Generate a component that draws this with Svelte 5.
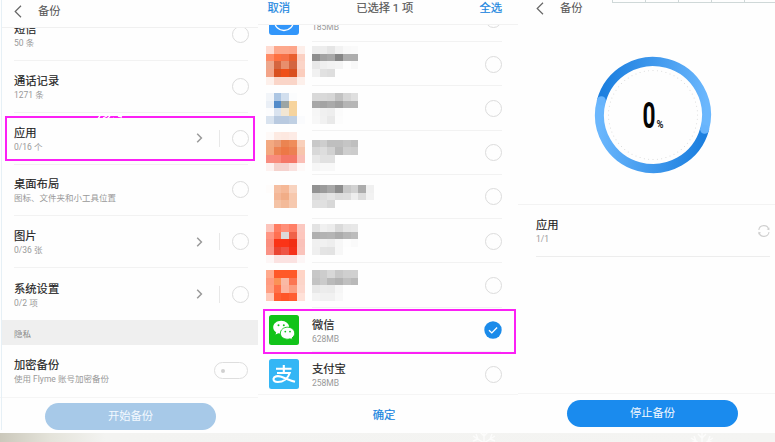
<script>
  const settings = [
    { title: '短信', sub: '50 条' },
    { title: '通话记录', sub: '1271 条' },
    { title: '应用', sub: '0/16 个', more: true, marked: true },
    { title: '桌面布局', sub: '图标、文件夹和小工具位置' },
    { title: '图片', sub: '0/36 张', more: true },
    { title: '系统设置', sub: '0/2 项', more: true }
  ];

  // Pixelated app rows: a grid of colours for the icon and one for the name.
  const C = 7.73;
  const _ = '';
  const hidden = [
    {
      y: 4.5,
      icon: [
        ['#ffdcd2', '#fda88c', '#fda88c', '#fda58a', '#fdeee9'],
        ['#ff8b66', '#ff7040', '#f67046', '#e9602f', '#fbd0c2'],
        ['#eda78c', '#d56640', '#e88e6c', '#d4653f', '#fbd4c7'],
        ['#f3a488', '#d9501f', '#ef4f18', '#d9501f', '#fbcdbd'],
        ['#fdf0eb', '#fad5c8', '#fad5c8', '#fad5c8', '#fdf0eb']
      ],
      name: [
        ['#ededed', '#ededed', '#e5e5e5', '#f2f2f2', '#f9f9f9', '#fafafa'],
        ['#8e8e8e', '#a2a2a2', '#a8a8a8', '#868686', '#adadad', '#adadad'],
        ['#e8e8e8', '#efefef', '#f2f2f2', '#f4f4f4', '#fdfdfd', '#f8f8f8'],
        ['#f1f1f1', '#e1e1e1', '#dedede', _, _, _]
      ]
    },
    {
      y: 6.4,
      icon: [
        ['#f2f5f9', '#adc6e3', '#d2dfee', '#fbfcfd', _],
        ['#eaeff6', '#538bca', '#9ca5a4', '#f7d49d', _],
        ['#fcfcfd', '#dae3ef', '#f2e6d3', '#f6d49e', _],
        ['#d9e3ef', '#b9cae0', '#b9cae0', '#c0d0e3', '#fafbfd']
      ],
      name: [
        ['#d9d9d9', '#d9d9d9', '#d6d6d6', '#c2c2c2', '#d6d6d6', '#dfdfdf'],
        ['#a7a7a7', '#a3a3a3', '#aaaaaa', '#a1a1a1', '#b5b5b5', '#b6b6b6'],
        ['#f6f6f6', '#f0f0f0', '#eeeeee', '#fbfbfb', _, _],
        ['#f7f7f7', '#f1f1f1', '#e9e9e9', '#fcfcfc', _, _]
      ]
    },
    {
      y: 1,
      icon: [
        ['#fef9f7', '#fdeae2', '#fde8e0', '#fdebe5', _],
        ['#f3a981', '#eb9c77', '#eb8451', '#ef8d5b', '#f9d0bb'],
        ['#f3a77f', '#ed8353', '#ed7846', '#ec8052', '#f7c5ac'],
        ['#f88d80', '#f98b7b', '#f57768', '#f57768', '#fabeb6'],
        ['#fdf1ef', '#f5d2cc', '#f5d2ce', '#fae2df', '#fef9f8']
      ],
      name: [
        _,
        ['#c8c8c8', '#cecece', '#bfbfbf', '#bfbfbf', '#c5c5c5', '#bfbfbf'],
        ['#d8d8d8', '#dddddd', '#d1d1d1', '#b9b9b9', '#cecece', '#cccccc'],
        ['#e8e8e8', '#e1e1e1', '#e1e1e1', _, _, _],
        ['#f6f6f6', '#f8f8f8', '#f8f8f8', _, _, _]
      ]
    },
    {
      y: 10.7,
      icon: [
        ['#fefcfb', '#f5bfa2', '#f5b897', '#f8d3bf', _],
        [_, '#f4b797', '#f1ad87', '#f7c8ad', _],
        [_, '#f4c3a6', '#f3ba99', '#f6c9af', _]
      ],
      name: [
        ['#929292', '#9b9b9b', '#a8a8a8', '#8d8d8d', '#c8c8c8', '#d2d2d2', '#acacac', '#f0f0f0'],
        ['#d8d8d8', '#dedede', '#e4e4e4', '#dcdcdc', '#dedede', '#eeeeee', '#dddddd', '#f2f2f2'],
        ['#e1e1e1', '#e0e0e0', '#d8d8d8', _, _, _, _, _]
      ]
    },
    {
      y: 5.2,
      icon: [
        ['#fcc5bc', '#ff7d62', '#ff8f79', '#ff7f66', '#fbc8c0'],
        ['#ff9684', '#ff7051', '#dcd9d9', '#f06249', '#fdc6bd'],
        ['#fa8e7e', '#fa3417', '#fa3417', '#f12e13', '#fac1b9'],
        ['#fa9285', '#ea4533', '#ef5344', '#f5311a', '#fac3bb'],
        ['#fdf6f6', '#fbe2e1', '#fbe2e1', '#fbe2e1', '#fdf6f6']
      ],
      name: [
        ['#e3e3e3', '#f0f0f0', '#ececec', '#dadada', '#e6e6e6', '#e8e8e8'],
        ['#afafaf', '#b3b3b3', '#b5b5b5', '#acacac', '#b6b6b6', '#bcbcbc'],
        ['#f0f0f0', '#f1f1f1', '#eeeeee', '#f7f7f7', '#fdfdfd', '#fafafa'],
        ['#efefef', '#e4e4e4', '#e3e3e3', '#f7f7f7', _, _]
      ]
    },
    {
      y: 7.1,
      icon: [
        ['#ffaa8d', '#ff5928', '#ff5928', '#ff5928', '#ffd4c6'],
        ['#ff9b80', '#fb9257', '#f9b9a5', '#fb7653', '#fcd5c9'],
        ['#ffa084', '#ff7049', '#fcb4a0', '#fc9d80', '#fdd7cd'],
        ['#ffc9b9', '#ff5d32', '#ff5528', '#ff5d32', '#ffe1d8']
      ],
      name: [
        ['#c7c7c7', '#cdcdcd', '#d8d8d8', '#c8c8c8', '#cfcfcf', '#d0d0d0'],
        ['#c3c3c3', '#cbcbcb', '#bababa', '#b3b3b3', '#c0c0c0', '#b9b9b9'],
        ['#e8e8e8', '#ececec', '#ebebeb', '#f6f6f6', _, _],
        ['#f3f3f3', '#f1f1f1', '#f1f1f1', '#f8f8f8', _, _]
      ]
    }
  ];
  const dots = Array.from({ length: 64 }, (v, i) => {
    const a = (i * Math.PI) / 32;
    return [60 + 44.5 * Math.cos(a), 60 + 44.5 * Math.sin(a)];
  });
</script>

{#snippet back()}
  <svg class="back" width="8" height="13" viewBox="0 0 8 13"><path d="M7 .8 1.2 6.5 7 12.2" /></svg>
{/snippet}

{#snippet mosaic(rows, cls)}
  <svg class={cls} width="30" height="30" shape-rendering="crispEdges">
    {#each rows as row, r}
      {#each row as fill, c}
        {#if fill}<rect x={c * C} y={r * C} width={C} height={C} {fill} />{/if}
      {/each}
    {/each}
  </svg>
{/snippet}

{#snippet flake()}
  <path d="M0-13V13M-11-7 11 7M-11 7 11-7M-4-11 0-7 4-11M-11-2-6-4-8-9M11-2 6-4 8-9" />
{/snippet}

<div class="page">
  <div class="panels">
    <section class="left">
      <header>{@render back()}<span>备份</span></header>
      <div class="list">
        <div class="scroll">
          {#each settings as s}
            <div class="row">
              <div class="text"><b>{s.title}</b><small>{s.sub}</small></div>
              {#if s.more}
                <svg class="more" width="7" height="10" viewBox="0 0 7 10"><path d="M1.2.8 5.4 5 1.2 9.2" /></svg>
                <i class="bar"></i>
              {/if}
              <span class="circle"></span>
              {#if s.marked}
                <div class="mark"></div>
                <svg class="spark" width="28" height="6" viewBox="0 0 28 6"><path d="M1 5 4 1M7 3 11 1M10 5 14 1M17 3 20 5M22 1 26 2M23 4 27 5" /></svg>
              {/if}
            </div>
          {/each}
        </div>
      </div>
      <div class="group">隐私</div>
      <div class="row encrypt">
        <div class="text"><b>加密备份</b><small>使用 Flyme 账号加密备份</small></div>
        <span class="toggle"></span>
      </div>
      <footer><button class="pale">开始备份</button></footer>
    </section>

    <section class="middle">
      <header><a>取消</a><span>已选择 1 项</span><a>全选</a></header>
      <div class="list">
        <div class="scroll">
          <div class="app">
            <svg class="icon" width="30" height="30" viewBox="0 0 30 30"><rect width="30" height="30" rx="3" fill="#3296fa" /><circle cx="15" cy="16" r="9.5" fill="none" stroke="#fff" stroke-width="1.3" /></svg>
            <div class="text first"><small>185MB</small></div>
            <span class="circle"></span>
          </div>
          {#each hidden as h}
            <div class="app blurred" style="--y:{h.y}px">
              {@render mosaic(h.icon, 'pix')}
              <div class="text">{@render mosaic(h.name, 'pixname')}</div>
              <span class="circle"></span>
            </div>
          {/each}
          <div class="app">
            <svg class="icon" width="30" height="30" viewBox="0 0 30 30">
              <rect width="30" height="30" rx="2.5" fill="#11c319" />
              <g transform="translate(0 .6)">
                <path d="M12.2 5.2c-4.5 0-8 2.9-8 6.5 0 2.1 1.2 3.9 3 5.1L6.5 19l2.8-1.4c.9.3 1.9.4 2.9.4 4.5 0 8-2.8 8-6.3s-3.5-6.5-8-6.5Z" fill="#fff" />
                <path d="M18.6 11.6c-4 0-7.2 2.6-7.2 6s3.2 6 7.2 6c.9 0 1.7-.1 2.5-.4l2.4 1.3-.6-2.1c1.7-1.1 2.8-2.8 2.8-4.8 0-3.4-3.2-6-7.1-6Z" fill="#fff" stroke="#11c319" stroke-width=".9" />
                <g fill="#11c319"><circle cx="9.5" cy="9.7" r="1" /><circle cx="14.8" cy="9.7" r="1" /><circle cx="16.3" cy="16" r=".9" /><circle cx="21" cy="16" r=".9" /></g>
              </g>
            </svg>
            <div class="text"><b>微信</b><small>628MB</small></div>
            <svg class="check" width="18" height="18" viewBox="0 0 18 18"><circle cx="9" cy="9" r="8.7" /><path d="m5 9.3 2.8 2.6 5.3-5.3" /></svg>
            <div class="mark"></div>
          </div>
          <div class="app">
            <svg class="icon" width="30" height="30" viewBox="0 0 30 30">
              <rect width="30" height="30" rx="2.5" fill="#34b6f5" />
              <g fill="none" stroke="#fff" stroke-width="2.1"><path d="M7 9.8H22.5M14.8 6V14M8 14H20.7C19 19.8 14 23 8.8 23 5.8 23 4.2 21.6 4.5 19.7 5 17.2 8.6 16.7 11.5 17.5 15.5 18.7 19.5 21 26 22.8" /></g>
            </svg>
            <div class="text"><b>支付宝</b><small>258MB</small></div>
            <span class="circle"></span>
          </div>
        </div>
      </div>
      <footer><a>确定</a></footer>
    </section>

    <section class="right">
      <svg class="rule" width="163" height="4" viewBox="0 0 163 4"><path d="M0 2.5H163M.5 0V2M33.500 0V2M66.500 0V2M99.500 0V2M132.500 0V2" /></svg>
      <header>{@render back()}<span>备份</span></header>
      <div class="progress">
        <svg width="120" height="120" viewBox="0 0 120 120">
          <defs>
            <linearGradient id="up" gradientUnits="userSpaceOnUse" x1="8" y1="46" x2="112" y2="60"><stop offset="0" stop-color="#1c7fdf" /><stop offset="1" stop-color="#6bb7fd" /></linearGradient>
            <linearGradient id="down" gradientUnits="userSpaceOnUse" x1="112" y1="74" x2="8" y2="60"><stop offset="0" stop-color="#1c7fdf" /><stop offset="1" stop-color="#6bb7fd" /></linearGradient>
          </defs>
          <g fill="none" stroke-width="9">
            <path d="M8.400 45.800A53.500 53.500 0 0 1 111.600 74.200" stroke="url(#up)" />
            <path d="M111.600 74.200A53.500 53.500 0 0 1 8.400 45.800" stroke="url(#down)" />
          </g>
          <circle cx="111.600" cy="74.200" r="4.500" fill="#68b4fc" />
          <circle cx="8.400" cy="45.800" r="4.500" fill="#68b4fc" />
          {#each dots as [x, y]}<circle cx={x} cy={y} r=".5" fill="#d4d4d4" />{/each}
          <text class="num" x="49.500" y="73.200" textLength="13" lengthAdjust="spacingAndGlyphs">0</text>
          <text class="pct" x="63.500" y="73.200" textLength="7" lengthAdjust="spacingAndGlyphs">%</text>
        </svg>
      </div>
      <div class="task">
        <div class="text"><b>应用</b><small>1/1</small></div>
        <svg width="12" height="12" viewBox="0 0 12 12"><path d="M.8 5A5.100 5.100 0 0 1 10.800 4.500M11 7A5.100 5.100 0 0 1 1 7.500" /><path class="tip" d="m8.600 4.300 2.800 1V2.600ZM3.200 7.700.4 6.700V9.400Z" /></svg>
      </div>
      <footer><button>停止备份</button></footer>
    </section>
  </div>
  <div class="strip">
    <svg width="775" height="9"><g transform="translate(484 10)">{@render flake()}</g><g transform="translate(702 12)">{@render flake()}</g></svg>
  </div>
</div>

<style>
  .page {
    width: 775px;
    height: 442px;
    overflow: hidden;
    background: #fefefe;
    font-family: Roboto, 'Noto Sans CJK SC', sans-serif;
    color: #2b2b2b;
  }
  .page * { box-sizing: border-box; }
  .panels { display: flex; height: 433px; }
  section { position: relative; display: flex; flex-direction: column; height: 433px; }
  header { display: flex; align-items: center; flex: none; font-size: 11.3px; line-height: 16px; color: #555; }
  header span { padding-top: 1px; }
  .back { fill: none; stroke: #666; stroke-width: 1.2; }
  .list { overflow: hidden; flex: none; }
  .text { display: flex; flex-direction: column; flex: 1; padding-top: 2px; }
  b { font-weight: 400; font-size: 11.3px; line-height: 15px; color: #222; -webkit-text-stroke: 0.15px #222; white-space: nowrap; }
  small { font-size: 8.5px; line-height: 12px; color: #999; white-space: nowrap; }
  .circle { width: 17px; height: 17px; border: 1.5px solid #dcdcdc; border-radius: 50%; flex: none; }
  footer { display: flex; justify-content: center; align-items: center; border-top: 1px solid #f5f5f5; }
  button { width: 171px; height: 27px; border: 0; padding: 0; border-radius: 14px; background: #1a8bee; color: #f3f9ff; font: inherit; font-size: 11.3px; line-height: 27px; }
  .pale { background: #a7c9e8; }
  a { color: #1a86e0; font-size: 11.3px; -webkit-text-stroke: 0.2px #1a86e0; }
  .mark { position: absolute; z-index: 2; border: 2.5px solid #fb20f5; }

  .left { width: 258px; }
  .left::before { content: ''; position: absolute; left: 1px; top: 0; width: 1px; height: 430px; background: #e6f0f6; }
  .left header { height: 28px; padding: 0 0 5px 12px; gap: 16px; border-bottom: 1px solid #f0f0f0; margin-left: 2px; }
  .left .list { height: 291.500px; }
  .left .scroll { margin-top: -19.300px; }
  .row { position: relative; display: flex; align-items: center; height: 51.950px; margin: 0 10px 0 14px; border-bottom: 1px solid #f2f2f2; }
  .row:last-child { border: 0; }
  .more { fill: none; stroke: #999; stroke-width: 1.5; margin-right: 16px; }
  .bar { width: 1px; height: 17px; background: #e8e8e8; margin-right: 12px; }
  .row .circle { margin-right: -1px; }
  .left .mark { left: -9px; top: 3px; width: 250px; height: 45px; }
  .spark { position: absolute; z-index: 3; left: 82px; top: 2px; fill: none; stroke: #fff; stroke-width: 1.3; }
  .group { height: 25.500px; margin-left: 2px; padding-left: 12px; background: #efefef; font-size: 8.5px; line-height: 28px; color: #888; }
  .encrypt { height: 51.500px; border: 0; }
  .toggle { width: 34px; height: 17px; border: 1.5px solid #dedede; border-radius: 9px; display: flex; align-items: center; padding-left: 6px; }
  .toggle::before { content: ''; width: 4px; height: 4px; border-radius: 50%; background: #d0d0d0; }
  .left footer { height: 36.500px; padding: 2px 0 0 3px; }

  .middle { width: 260px; }
  .middle header { height: 25px; padding: 0 16px 6px 9.500px; justify-content: space-between; border-bottom: 1px solid #f2f2f2; }
  .middle header span { -webkit-text-stroke: 0.15px #555; padding: 0; }
  .middle .list { height: 369px; }
  .middle .scroll { margin-top: -27.400px; }
  .app { position: relative; display: flex; align-items: center; height: 44.300px; padding: 0 16.500px 0 11px; }
  .app .text { margin: 0 -17px 0 13px; height: 100%; justify-content: center; border-bottom: 1px solid #f2f2f2; position: relative; padding-top: 3.500px; }
  .app .first { justify-content: flex-end; padding-bottom: 7.500px; }
  .app:last-child .text { border: 0; }
  .app svg { flex: none; }
  .blurred svg { overflow: visible; align-self: flex-start; margin-top: var(--y); }
  .pix { margin-left: -3.500px; margin-right: 3.500px; }
  .app.blurred .text { justify-content: flex-start; padding-top: 0; }
  .check { position: relative; }
  .check circle { fill: #1b8bea; }
  .check path { fill: none; stroke: #fff; stroke-width: 1.4; }
  .middle .mark { left: 5px; top: 1px; width: 253px; height: 45px; }
  .middle footer { height: 39px; padding: 0 8px 1px 0; }

  .right { width: 257px; }
  .rule { position: absolute; top: 0; right: 0; fill: none; stroke: #cfd8d8; }
  .right header { height: 17px; padding-left: 18px; gap: 16px; }
  .progress { height: 188px; display: flex; justify-content: center; align-items: center; padding: 8px 0 0 13px; border-bottom: 1px solid #f3f3f3; }
  .num { font: 700 36px Roboto, sans-serif; fill: #050505; }
  .pct { font: 700 10px Roboto, sans-serif; fill: #222; }
  .task { height: 52px; display: flex; align-items: center; margin: 0 5.500px 0 18px; border-bottom: 1px solid #ededed; }
  .task svg { fill: none; stroke: #d0d0d0; stroke-width: 1.1; }
  .task .tip { fill: #d0d0d0; stroke: none; }
  .right footer { margin-top: auto; height: 40px; padding: 0 0 1px 12px; }
  .right button { padding-top: 1px; line-height: 26px; }

  .strip { height: 9px; background: linear-gradient(90deg, #cbc8bb 0, #e4e3da 50px, #f3f3f1 105px, #f4f4f2 100%); }
  .strip svg { display: block; fill: none; stroke: #fff; stroke-opacity: 0.7; stroke-width: 1.4; }
</style>
